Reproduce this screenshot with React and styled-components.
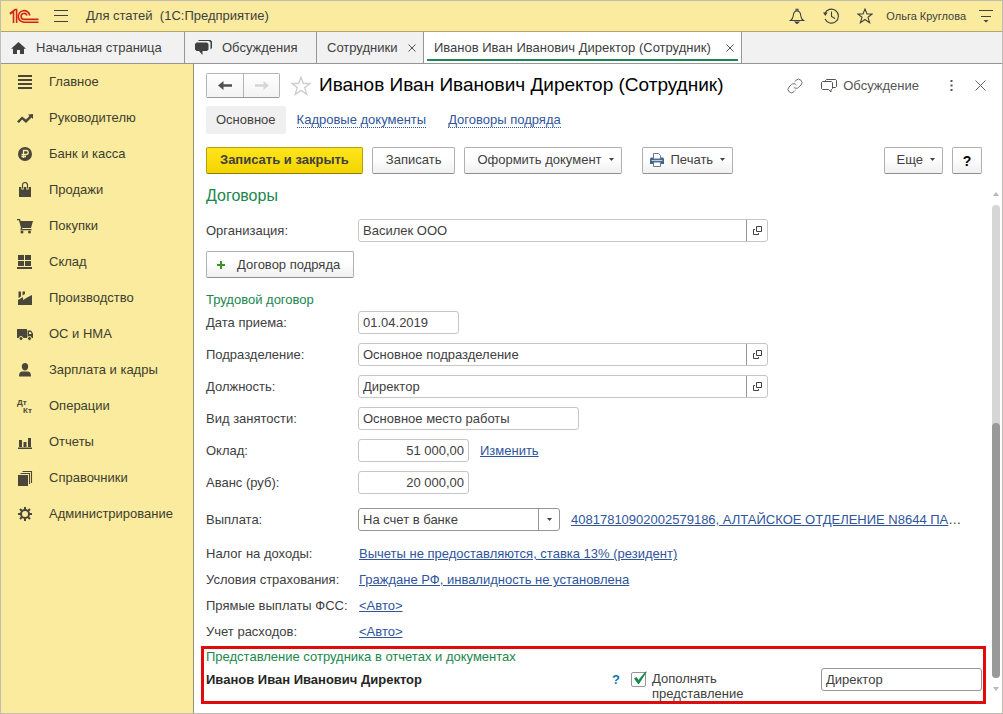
import React from 'react';
import styled, { createGlobalStyle, css } from 'styled-components';

const GlobalStyle = createGlobalStyle`
  *, *::before, *::after { box-sizing: border-box; }
  body {
    margin: 0;
    background: #fff;
    color: #404040;
    font-family: "Liberation Sans", Arial, sans-serif;
    font-size: 13px;
    line-height: 16px;
  }
  button, input, select { font: inherit; color: inherit; margin: 0; }
  button { cursor: pointer; }
  svg { display: block; flex: none; }
`;

const Shell = styled.div`
  display: flex;
  flex-direction: column;
  min-height: 100vh;
  border: 1px solid #c0bdaf;
`;

const TopBar = styled.header`
  display: flex;
  align-items: center;
  height: 31px;
  padding: 0 9px 0 8px;
  background: #faeb9e;
  border-bottom: 1px solid #b3a66c;
`;

const AppTitle = styled.span`
  flex: 1;
  padding-left: 18px;
  white-space: pre;
`;

const IconButton = styled.button`
  display: flex;
  align-items: center;
  justify-content: center;
  padding: 0;
  border: 0;
  background: none;
  color: ${(p) => p.$color || '#404040'};
`;

const MenuButton = styled(IconButton)`
  margin-left: 14px;
`;

const TopTools = styled.div`
  display: flex;
  align-items: center;
  gap: 18px;
`;

const User = styled.button`
  padding: 0;
  margin: 0 -5px;
  border: 0;
  background: none;
  font-size: 11px;
`;

const Tabs = styled.nav`
  display: flex;
  height: 32px;
  background: #f1f1f1;
  border-bottom: 1px solid #969696;
`;

const Tab = styled.div`
  display: flex;
  align-items: center;
  justify-content: space-between;
  gap: 8px;
  min-width: ${(p) => p.$min}px;
  padding: 0 7px 0 10px;
  border-right: 1px solid #969696;
  white-space: nowrap;
  ${(p) =>
    p.$active &&
    css`
      background: #fff linear-gradient(#258453, #258453) 3px 27px / calc(100% - 6px) 2px no-repeat;
    `}
`;

const TabLink = styled.a`
  display: flex;
  align-items: center;
  gap: 10px;
  color: inherit;
  text-decoration: none;
`;

const Body = styled.div`
  display: flex;
  flex: 1;
`;

const Sidebar = styled.nav`
  flex: none;
  width: 193px;
  background: #faeb9e;
  border-right: 1px solid #96906a;
`;

const SideLink = styled.a`
  display: flex;
  align-items: center;
  gap: 15px;
  height: 36px;
  padding-left: 15px;
  color: #403d2e;
  text-decoration: none;
  white-space: nowrap;
`;

const SideIcon = styled.svg`
  color: #4a473a;
`;

const Main = styled.main`
  display: flex;
  flex: 1;
  flex-direction: column;
  min-width: 0;
  padding-top: 9px;
`;

const TitleRow = styled.div`
  display: flex;
  align-items: center;
  height: 25px;
  padding: 0 16px 0 12px;
`;

const History = styled.div`
  display: flex;
  border: 1px solid #b4b4b4;
  border-bottom-color: #999;
  border-radius: 2px;
`;

const HistoryButton = styled.button`
  display: flex;
  align-items: center;
  justify-content: center;
  width: 36px;
  height: 23px;
  padding: 0;
  border: 0;
  background: linear-gradient(#fff, #f3f3f3);
  color: #505050;
  & + & {
    border-left: 1px solid #b4b4b4;
  }
  &:disabled {
    color: #d6d6d6;
  }
`;

const FavoriteButton = styled(IconButton)`
  margin-left: 11px;
`;

const Title = styled.h1`
  flex: 1;
  margin: 0 0 2px 8px;
  color: #000;
  font-size: 19px;
  font-weight: 400;
  line-height: 24px;
  white-space: nowrap;
`;

const TitleTools = styled.div`
  display: flex;
  align-items: center;
`;

const Discuss = styled(IconButton)`
  gap: 6px;
  margin: 0 31px 0 17px;
`;

const CloseButton = styled(IconButton)`
  margin-left: 22px;
`;

const Sections = styled.nav`
  display: flex;
  align-items: center;
  gap: 22px;
  padding: 8px 12px 13px;
`;

const CurrentSection = styled.span`
  margin-right: -11px;
  padding: 6px 10px;
  border-radius: 2px;
  background: #f0f0f0;
`;

const SectionLink = styled.a`
  border-bottom: 1px dotted #30559c;
  color: #30559c;
  line-height: 15px;
  text-decoration: none;
`;

const Toolbar = styled.div`
  display: flex;
  gap: 9px;
  padding: 0 20px 0 12px;
`;

const Spacer = styled.div`
  flex: ${(p) => (p.$grow ? 1 : 'none')};
  width: 2px;
`;

const buttonPadding = {
  plain: '0 13px 2px',
  menu: '0 7px 2px 12px',
  iconMenu: '0 7px 2px',
  add: '0 13px 0 10px',
};

const Button = styled.button`
  display: flex;
  align-items: center;
  justify-content: center;
  gap: ${(p) => (p.$kind === 'add' ? 12 : 7)}px;
  height: 27px;
  padding: ${(p) => buttonPadding[p.$kind || 'plain']};
  border: 1px solid #b0b0b0;
  border-bottom-color: #8f8f8f;
  border-radius: 2px;
  background: linear-gradient(#fff 40%, #f0f0f0);
  white-space: nowrap;
  ${(p) =>
    p.$primary &&
    css`
      border-color: #b59f10;
      border-bottom-color: #8d7c10;
      background: linear-gradient(#ffe51c, #f3d400);
      font-weight: 700;
    `}
  ${(p) =>
    p.$help &&
    css`
      width: 30px;
      padding: 0;
      color: #000;
      font-size: 14px;
      font-weight: 700;
    `}
`;

const ScrollArea = styled.div`
  display: flex;
  flex: 1;
  padding-top: 13px;
`;

const Form = styled.form`
  flex: 1;
  min-width: 0;
  padding: 0 4px 8px 12px;
`;

const Heading = styled.h2`
  margin: 0;
  color: #20874c;
  font-size: ${(p) => (p.$large ? 16 : 13)}px;
  font-weight: 400;
  line-height: ${(p) => (p.$large ? 18 : 15)}px;
`;

const OrganizationBlock = styled.div`
  padding-top: 10px;
`;

const Row = styled.div`
  display: flex;
  align-items: center;
  min-height: ${(p) => p.$height || 32}px;
`;

const Label = styled.label`
  flex: none;
  width: 152px;
  white-space: nowrap;
`;

const Field = styled.div`
  position: relative;
  display: flex;
  flex: 0 1 ${(p) => p.$width}px;
  height: 23px;
  margin-bottom: 1px;
  border: 1px solid ${(p) => (p.$dark ? '#969696' : '#c6c6c6')};
  border-radius: 3px;
  background: #fff;
`;

const SelectField = styled(Field)`
  flex-shrink: 0;
`;

const Input = styled.input`
  flex: 1;
  min-width: 0;
  width: 100%;
  padding: 1px 4px 0;
  border: 0;
  background: none;
  text-align: ${(p) => (p.$right ? 'right' : 'left')};
`;

const OpenButton = styled(IconButton)`
  width: 21px;
  border-left: 1px solid #969696;
`;

const Select = styled.select`
  appearance: none;
  width: 100%;
  padding: 1px 24px 0 4px;
  border: 0;
  background: none;
`;

const SelectArrow = styled.span`
  position: absolute;
  top: 0;
  right: 0;
  bottom: 0;
  display: flex;
  align-items: center;
  justify-content: center;
  width: 21px;
  border-left: 1px solid #969696;
  pointer-events: none;
`;

const Link = styled.a`
  margin-left: ${(p) => (p.$after ? 11 : 1)}px;
  color: #30559c;
  text-decoration: underline;
  white-space: nowrap;
`;

const AddRow = styled.div`
  display: flex;
  padding: 4px 0 14px;
`;

const Frame = styled.section`
  margin: 1px 0 0 -5px;
  padding: 0 1px 0 2px;
  border: 3px solid #e00b0b;
`;

const Presentation = styled.div`
  display: flex;
  align-items: flex-start;
  padding-top: 4px;
`;

const FullName = styled.strong`
  flex: 1;
  padding-top: 4px;
  color: #262626;
  line-height: 15px;
`;

const Hint = styled.button`
  margin: 4px 11px 0 0;
  padding: 0;
  border: 0;
  background: none;
  color: #0f76ad;
  font-weight: 700;
  line-height: 15px;
`;

const CheckLabel = styled.label`
  display: flex;
  align-items: flex-start;
  gap: 6px;
  width: 190px;
  line-height: 15px;
`;

const CheckText = styled.span`
  width: 110px;
  padding-top: 3px;
`;

const CheckBox = styled.span`
  position: relative;
  display: block;
  margin-top: 4px;
  width: 15px;
  height: 15px;
  svg {
    position: absolute;
    left: 1px;
    bottom: 2px;
    display: none;
    pointer-events: none;
  }
  input:checked + svg {
    display: block;
  }
`;

const CheckInput = styled.input.attrs({ type: 'checkbox' })`
  appearance: none;
  display: block;
  width: 15px;
  height: 15px;
  border: 1px solid #969696;
  border-radius: 2px;
  background: #fff;
`;

const ScrollBar = styled.div`
  display: flex;
  flex: none;
  flex-direction: column;
  align-items: center;
  gap: 9px;
  width: 12px;
  padding: 5px 0 22px;
  color: #bababa;
`;

const Track = styled.div`
  display: flex;
  flex: 1;
  flex-direction: column;
  justify-content: flex-end;
  width: 8px;
  border-radius: 4px;
  background: #d6d6d6;
`;

const Thumb = styled.div`
  height: 54%;
  border-radius: 4px;
  background: #999;
`;

const Logo = () => (
  <svg width="31" height="17" viewBox="0 0 31 17" fill="none" stroke="#d22419" strokeWidth="1.6">
    <path d="M1 6.2 4.500 3.300V15M7.600 15V1.500H6.200L1 5.500" />
    <path d="M20.800 7.500A5.800 5.800 0 1 0 15.600 14.200H29.500" />
    <path d="M18 7.500A3 3 0 1 0 15.400 11.400H29.500" />
  </svg>
);

const BurgerIcon = () => (
  <svg width="14" height="12" viewBox="0 0 14 12" stroke="currentColor">
    <path d="M0 .5h14M0 5.500h14M0 11.500h14" />
  </svg>
);

const BellIcon = () => (
  <svg width="16" height="16" viewBox="0 0 16 16" fill="none" stroke="currentColor" strokeWidth="1.1">
    <path d="M1.500 12.500c2-1.300 2.600-2.300 2.800-5C4.500 4.500 5.500 3 8 3s3.500 1.500 3.700 4.500c.2 2.700.8 3.700 2.800 5z" />
    <path d="M7 3V1.200h2V3" />
    <path d="M6.300 14h3.400L8 15.600z" fill="currentColor" />
  </svg>
);

const ClockIcon = () => (
  <svg width="16" height="16" viewBox="0 0 16 16" fill="none" stroke="currentColor" strokeWidth="1.1">
    <path d="M1.900 5.500A7 7 0 1 1 2 11" />
    <path d="M8.500 3.500V8.500l3.500 2" />
    <path d="M0 4.500h4.600L2.400 8z" fill="currentColor" stroke="none" />
  </svg>
);

const StarIcon = ({ size = 16 }) => (
  <svg width={size} height={size} viewBox="0 0 16 16" fill="none" stroke="currentColor" strokeWidth="1.100">
    <path d="M8 1l2 5h5.200L11 9.300l1.600 5.400L8 11.500l-4.600 3.200L5 9.300.8 6H6z" />
  </svg>
);

const MenuIcon = () => (
  <svg width="14" height="14" viewBox="0 0 14 14">
    <path d="M0 1.500h14M2 7.500h10" stroke="currentColor" />
    <path d="M4.500 11h5L7 13.500z" fill="currentColor" />
  </svg>
);

const HomeIcon = () => (
  <svg width="15" height="14" viewBox="0 0 15 14" fill="currentColor">
    <path d="M7.500 1 15 7.800h-2V13H9V9H6v4H2V7.800H0z" />
  </svg>
);

const ChatSolidIcon = () => (
  <svg width="17" height="15" viewBox="0 0 17 15" fill="currentColor">
    <path d="M4 0h11.500L17 1.500V8l-1.500 1.500V2.500L14 1H3z" />
    <path d="M1.500 2.500H12L13.500 4v5.500L12 11H7.500v4L4 11H1.500L0 9.500V4z" />
  </svg>
);

const ChatIcon = () => (
  <svg width="16" height="15" viewBox="0 0 16 15" fill="none" stroke="currentColor">
    <path d="M1.500 3.500h9l1 1v6l-1 1h-.5v2.500L7.500 11.500h-6l-1-1v-6z" />
    <path d="M4.500 3.500v-1l1-1h9l1 1v6l-1 1h-3" />
  </svg>
);

const LinkIcon = () => (
  <svg width="18" height="16" viewBox="0 0 24 24" fill="none" stroke="currentColor" strokeWidth="1.500">
    <path d="M10 13.500a5 5 0 0 0 7.500.5l3.500-3.500a5 5 0 0 0-7.500-7L11.500 5.500" />
    <path d="M14 10.500a5 5 0 0 0-7.500-.5L3 13.500a5 5 0 0 0 7.500 7l2-2" />
  </svg>
);

const DotsIcon = () => (
  <svg width="3" height="11" viewBox="0 0 3 11" fill="currentColor">
    <path d="M.5 0h2v2h-2zM.5 4.500h2v2h-2zM.5 9h2v2h-2z" />
  </svg>
);

const CloseIcon = ({ size = 8 }) => (
  <svg width={size} height={size} viewBox={`0 0 ${size} ${size}`} stroke="currentColor">
    <path d={`M.5 .5 ${size - 0.5} ${size - 0.5}M${size - 0.5} .5 .5 ${size - 0.5}`} />
  </svg>
);

const ArrowIcon = ({ right }) => (
  <svg width="14" height="11" viewBox="0 0 14 11" fill="currentColor">
    <path d={right ? 'M14 5.500 8.500 1v3.200H0v2.600h8.500V10z' : 'M0 5.500 5.500 1v3.200H14v2.600H5.500V10z'} />
  </svg>
);

const Caret = () => (
  <svg width="5" height="3" viewBox="0 0 5 3" fill="currentColor">
    <path d="M0 0h5L2.500 3z" />
  </svg>
);

const ScrollCaret = ({ up }) => (
  <svg width="6" height="4" viewBox="0 0 6 4" fill="currentColor">
    <path d={up ? 'M3 0 6 4H0z' : 'M0 0h6L3 4z'} />
  </svg>
);

const OpenIcon = () => (
  <svg width="9" height="9" viewBox="0 0 9 9" fill="none" stroke="currentColor">
    <path d="M3.500 .5h5v5h-5zM2 3.500H.5v5h5V7" />
  </svg>
);

const PlusIcon = () => (
  <svg width="8" height="8" viewBox="0 0 8 8" stroke="#3d9324" strokeWidth="2">
    <path d="M4 0v8M0 4h8" />
  </svg>
);

const PrinterIcon = () => (
  <svg width="14" height="14" viewBox="0 0 14 14">
    <path d="M1 4.500h12l1 1V11H0V5.500z" fill="#3f648e" />
    <path d="M3.500 6V.5h5l2 2V6z" fill="#fff" stroke="#66788c" />
    <path d="M1.500 7.500h11" stroke="#b9cde3" />
    <path d="M3.500 9h7v4.500h-7z" fill="#fff" stroke="#66788c" />
  </svg>
);

const CheckIcon = () => (
  <svg width="15" height="14" viewBox="0 0 15 14" fill="#178a4b">
    <path d="M2 7.500 4.500 6 6.500 9 13 1 15 .5 7 13H6z" />
  </svg>
);

const sideIcons = {
  main: <path d="M1 1h14v2H1zM1 5h14v2H1zM1 9h14v2H1zM1 13h14v2H1z" />,
  trend: <path d="m0 11.500 5-5 4 3L12.500 6 11 4.500l5-.5v5l-1.500-1.500L9 13 5 9.500 2 13z" />,
  ruble: (
    <>
      <circle cx="8" cy="8" r="7" />
      <path d="M6.500 12V4.500h2.700a2 2 0 0 1 0 4H4.500M4.500 10.500H9" fill="none" stroke="#faeb9e" strokeWidth="1.300" />
    </>
  ),
  bag: (
    <>
      <path d="M2 5h12v10H2z" />
      <path d="M5.500 7.500V3.500a2.500 2.500 0 0 1 5 0v4" fill="none" stroke="#faeb9e" strokeWidth="2.500" />
      <path d="M5.500 6.500V3a2.500 2.500 0 0 1 5 0v3.500" fill="none" stroke="currentColor" strokeWidth="1.200" />
    </>
  ),
  cart: (
    <>
      <path d="M0 1h3l.7 2H16l-2 7H5.200L5 11h9.500v1.300H3.200L4 10 2 2.300H0z" />
      <circle cx="5" cy="14" r="1.500" />
      <circle cx="12.500" cy="14" r="1.500" />
    </>
  ),
  store: <path d="M1 1h6v5H1zM8 1h6v5H8zM1 7h6v5H1zM8 7h6v5H8zM0 13h15v2H0z" />,
  factory: <path d="M1 10l5-3v3l5-3 4-2v10H1zM1.500 8V1.500H4V6.500zM5.500 1.500H8V4L5.500 5.500z" />,
  truck: (
    <>
      <path d="M0 3h10v9H0zM10.500 4.500H14l2 3V12h-5.500z" />
      <path d="M12 6h1.500l1.200 2H12z" fill="#faeb9e" />
      <circle cx="4" cy="12.500" r="2" stroke="#faeb9e" />
      <circle cx="12.500" cy="12.500" r="2" stroke="#faeb9e" />
    </>
  ),
  person: <path d="M8 1c2 0 3.200 1.500 3.200 3.500S10 8.500 8 8.500 4.800 6.500 4.800 4.500 6 1 8 1zM5.500 9.500h5c2.500 0 3.500 1.500 3.500 5H2c0-3.500 1-5 3.500-5z" />,
  ops: (
    <g fontSize="8" fontWeight="700">
      <text x="0" y="7">Дт</text>
      <text x="6" y="15">Кт</text>
    </g>
  ),
  chart: <path d="M1 13.500h14V15H1zM2 6h3v7H2zM6.500 8h3v5h-3zM11 4h3v9h-3z" />,
  books: (
    <>
      <path d="M1 5h10v11H1z" />
      <path d="M3.500 3.500h9V14M5.500 1.500h9V13" fill="none" stroke="currentColor" strokeWidth="1.100" />
    </>
  ),
  gear: (
    <>
      <circle cx="8" cy="8" r="4" fill="none" stroke="currentColor" strokeWidth="2" />
      <path
        d="M8 1v3M8 12v3M1 8h3M12 8h3M3 3l2 2M11 11l2 2M13 3l-2 2M5 11l-2 2"
        fill="none"
        stroke="currentColor"
        strokeWidth="2"
      />
    </>
  ),
};

const menu = [
  ['main', 'Главное'],
  ['trend', 'Руководителю'],
  ['ruble', 'Банк и касса'],
  ['bag', 'Продажи'],
  ['cart', 'Покупки'],
  ['store', 'Склад'],
  ['factory', 'Производство'],
  ['truck', 'ОС и НМА'],
  ['person', 'Зарплата и кадры'],
  ['ops', 'Операции'],
  ['chart', 'Отчеты'],
  ['books', 'Справочники'],
  ['gear', 'Администрирование'],
];

const TextRow = ({ id, label, value, width, right, open, children }) => (
  <Row>
    <Label htmlFor={id}>{label}</Label>
    <Field $width={width}>
      <Input id={id} defaultValue={value} $right={right} />
      {open && (
        <OpenButton type="button" aria-label="Открыть">
          <OpenIcon />
        </OpenButton>
      )}
    </Field>
    {children}
  </Row>
);

const LinkRow = ({ id, label, text }) => (
  <Row $height={26}>
    <Label as="span" id={id}>{label}</Label>
    <Link href="#" aria-describedby={id}>{text}</Link>
  </Row>
);

export default function App() {
  return (
    <>
      <GlobalStyle />
      <Shell>
        <TopBar>
          <Logo />
          <MenuButton aria-label="Меню"><BurgerIcon /></MenuButton>
          <AppTitle>{'Для статей  (1С:Предприятие)'}</AppTitle>
          <TopTools>
            <IconButton aria-label="Уведомления"><BellIcon /></IconButton>
            <IconButton aria-label="История"><ClockIcon /></IconButton>
            <IconButton aria-label="Избранное"><StarIcon /></IconButton>
            <User>Ольга Круглова</User>
            <IconButton aria-label="Настройки"><MenuIcon /></IconButton>
          </TopTools>
        </TopBar>

        <Tabs>
          <Tab $min={184}>
            <TabLink href="#"><HomeIcon />Начальная страница</TabLink>
          </Tab>
          <Tab $min={132}>
            <TabLink href="#"><ChatSolidIcon />Обсуждения</TabLink>
          </Tab>
          <Tab $min={107}>
            <TabLink href="#">Сотрудники</TabLink>
            <IconButton $color="#555" aria-label="Закрыть"><CloseIcon /></IconButton>
          </Tab>
          <Tab $min={318} $active>
            <TabLink href="#">Иванов Иван Иванович Директор (Сотрудник)</TabLink>
            <IconButton $color="#555" aria-label="Закрыть"><CloseIcon /></IconButton>
          </Tab>
        </Tabs>

        <Body>
          <Sidebar>
            {menu.map(([icon, text]) => (
              <SideLink href="#" key={icon}>
                <SideIcon width="18" height="16" viewBox="-1 0 18 16" fill="currentColor">
                  {sideIcons[icon]}
                </SideIcon>
                {text}
              </SideLink>
            ))}
          </Sidebar>

          <Main>
            <TitleRow>
              <History>
                <HistoryButton aria-label="Назад"><ArrowIcon /></HistoryButton>
                <HistoryButton aria-label="Вперед" disabled><ArrowIcon right /></HistoryButton>
              </History>
              <FavoriteButton $color="#cfcfcf" aria-label="В избранное"><StarIcon size={20} /></FavoriteButton>
              <Title>Иванов Иван Иванович Директор (Сотрудник)</Title>
              <TitleTools>
                <IconButton $color="#707070" aria-label="Ссылка"><LinkIcon /></IconButton>
                <Discuss $color="#555"><ChatIcon />Обсуждение</Discuss>
                <IconButton $color="#555" aria-label="Действия"><DotsIcon /></IconButton>
                <CloseButton $color="#666" aria-label="Закрыть"><CloseIcon size={11} /></CloseButton>
              </TitleTools>
            </TitleRow>

            <Sections>
              <CurrentSection>Основное</CurrentSection>
              <SectionLink href="#">Кадровые документы</SectionLink>
              <SectionLink href="#">Договоры подряда</SectionLink>
            </Sections>

            <Toolbar>
              <Button $primary>Записать и закрыть</Button>
              <Button>Записать</Button>
              <Button $kind="menu">Оформить документ<Caret /></Button>
              <Spacer />
              <Button $kind="iconMenu"><PrinterIcon />Печать<Caret /></Button>
              <Spacer $grow />
              <Button $kind="menu">Еще<Caret /></Button>
              <Button $help>?</Button>
            </Toolbar>

            <ScrollArea>
              <Form onSubmit={(e) => e.preventDefault()}>
                <Heading $large>Договоры</Heading>
                <OrganizationBlock>
                  <TextRow id="org" label="Организация:" value="Василек ООО" width={410} open />
                </OrganizationBlock>
                <AddRow>
                  <Button type="button" $kind="add"><PlusIcon />Договор подряда</Button>
                </AddRow>

                <Heading>Трудовой договор</Heading>
                <TextRow id="date" label="Дата приема:" value="01.04.2019" width={101} />
                <TextRow id="dept" label="Подразделение:" value="Основное подразделение" width={410} open />
                <TextRow id="post" label="Должность:" value="Директор" width={410} open />
                <TextRow id="kind" label="Вид занятости:" value="Основное место работы" width={221} />
                <TextRow id="salary" label="Оклад:" value="51 000,00" width={111} right>
                  <Link $after href="#">Изменить</Link>
                </TextRow>
                <TextRow id="advance" label="Аванс (руб):" value="20 000,00" width={111} right />
                <Row $height={42}>
                  <Label htmlFor="payment">Выплата:</Label>
                  <SelectField $width={202} $dark>
                    <Select id="payment" defaultValue="bank">
                      <option value="bank">На счет в банке</option>
                    </Select>
                    <SelectArrow><Caret /></SelectArrow>
                  </SelectField>
                  <Link $after href="#">40817810902002579186, АЛТАЙСКОЕ ОТДЕЛЕНИЕ N8644 ПА</Link>
                  <span>…</span>
                </Row>
                <LinkRow id="tax" label="Налог на доходы:" text="Вычеты не предоставляются, ставка 13% (резидент)" />
                <LinkRow id="insurance" label="Условия страхования:" text="Граждане РФ, инвалидность не установлена" />
                <LinkRow id="fss" label="Прямые выплаты ФСС:" text="<Авто>" />
                <LinkRow id="costs" label="Учет расходов:" text="<Авто>" />

                <Frame>
                  <Heading>Представление сотрудника в отчетах и документах</Heading>
                  <Presentation>
                    <FullName>Иванов Иван Иванович Директор</FullName>
                    <Hint type="button">?</Hint>
                    <CheckLabel>
                      <CheckBox>
                        <CheckInput defaultChecked />
                        <CheckIcon />
                      </CheckBox>
                      <CheckText>Дополнять представление</CheckText>
                    </CheckLabel>
                    <Field $width={161} $dark>
                      <Input aria-label="Представление" defaultValue="Директор" />
                    </Field>
                  </Presentation>
                </Frame>
              </Form>
              <ScrollBar>
                <ScrollCaret up />
                <Track><Thumb /></Track>
                <ScrollCaret />
              </ScrollBar>
            </ScrollArea>
          </Main>
        </Body>
      </Shell>
    </>
  );
}
